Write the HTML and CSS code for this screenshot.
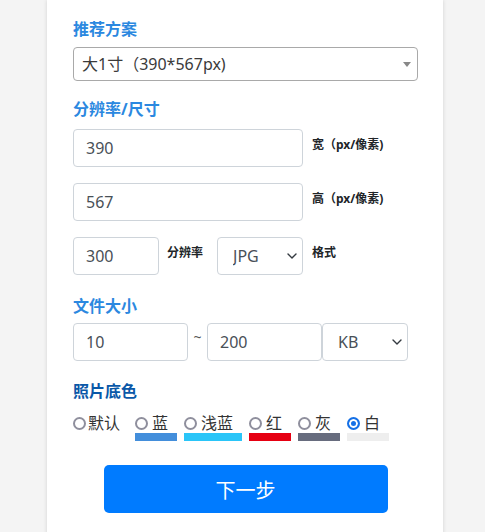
FILE: index.html
```html
<!DOCTYPE html>
<html lang="zh-CN">
<head>
<meta charset="utf-8">
<title>证件照规格</title>
<link rel="stylesheet" href="styles.css">
</head>
<body>
<div class="card">
  <h3 class="heading h-plan">推荐方案</h3>
  <div class="select-wrap plan-wrap">
    <select class="plan">
      <option>大1寸（390*567px)</option>
    </select>
    <svg class="tri" width="8" height="5" viewBox="0 0 8 5"><path d="M0 0H8L4 5Z" fill="#888"/></svg>
  </div>

  <h3 class="heading h-size">分辨率/尺寸</h3>
  <div class="row">
    <input class="input wide" type="text" value="390">
    <span class="note">宽（px/像素)</span>
  </div>
  <div class="row">
    <input class="input wide" type="text" value="567">
    <span class="note">高（px/像素)</span>
  </div>
  <div class="row">
    <input class="input short" type="text" value="300">
    <span class="note note-dpi">分辨率</span>
    <div class="select-wrap small">
      <select class="cselect"><option>JPG</option></select>
      <svg class="chev" width="10" height="6" viewBox="0 0 10 6"><polyline points="1,1 5,5 9,1" fill="none" stroke="#343a40" stroke-width="1.4" stroke-linecap="round" stroke-linejoin="round"/></svg>
    </div>
    <span class="note">格式</span>
  </div>

  <h3 class="heading h-file">文件大小</h3>
  <div class="row">
    <input class="input mid" type="text" value="10">
    <span class="tilde">~</span>
    <input class="input mid" type="text" value="200">
    <div class="select-wrap small">
      <select class="cselect"><option>KB</option></select>
      <svg class="chev" width="10" height="6" viewBox="0 0 10 6"><polyline points="1,1 5,5 9,1" fill="none" stroke="#343a40" stroke-width="1.4" stroke-linecap="round" stroke-linejoin="round"/></svg>
    </div>
  </div>

  <h3 class="heading h-bg">照片底色</h3>
  <div class="colors">
    <label class="opt opt-default"><span class="opt-top"><input class="radio" type="radio" name="bg">默认</span></label>
    <label class="opt"><span class="opt-top"><input class="radio" type="radio" name="bg">蓝</span><span class="swatch sw-blue"></span></label>
    <label class="opt"><span class="opt-top"><input class="radio" type="radio" name="bg">浅蓝</span><span class="swatch sw-light"></span></label>
    <label class="opt"><span class="opt-top"><input class="radio" type="radio" name="bg">红</span><span class="swatch sw-red"></span></label>
    <label class="opt"><span class="opt-top"><input class="radio" type="radio" name="bg">灰</span><span class="swatch sw-gray"></span></label>
    <label class="opt"><span class="opt-top"><input class="radio" type="radio" name="bg" checked>白</span><span class="swatch sw-white"></span></label>
  </div>

  <button class="next" type="button">下一步</button>
</div>
</body>
</html>
```

FILE: styles.css
```css
html, body {
  margin: 0;
  padding: 0;
}
body {
  background: #f4f4f4;
  font-family: "Noto Sans", "Noto Sans CJK SC", sans-serif;
}
.card {
  width: 396px;
  min-height: 560px;
  margin-left: 47px;
  box-sizing: border-box;
  padding: 17px 25px 40px 26px;
  background: #fff;
  box-shadow: 0 0 4px rgba(0, 0, 0, 0.14);
}
.heading {
  margin: 0;
  font-size: 16px;
  line-height: 24px;
  font-weight: 700;
  color: #2b88e0;
}
.h-plan { margin-bottom: 6px; }
.h-size { margin: 16px 0 8px; }
.h-file { margin: 19px 0 5px; }
.h-bg { margin: 18px 0 11px; color: #0a58a8; }

.select-wrap {
  position: relative;
}
.plan-wrap {
  height: 34px;
}
.plan {
  -webkit-appearance: none;
  appearance: none;
  width: 100%;
  height: 34px;
  box-sizing: border-box;
  border: 1px solid #a9a9a9;
  border-radius: 4px;
  background: #fff;
  padding: 0 8px;
  font-family: inherit;
  font-size: 16px;
  color: #3a3a3a;
  outline: none;
}
.tri {
  position: absolute;
  right: 7px;
  top: 15px;
  pointer-events: none;
}

.row {
  display: flex;
  align-items: flex-start;
}
.row + .row {
  margin-top: 16px;
}
.input {
  height: 38px;
  box-sizing: border-box;
  border: 1px solid #ced4da;
  border-radius: 4px;
  padding: 0 12px;
  font-family: inherit;
  font-size: 16px;
  color: #495057;
  background: #fff;
  outline: none;
}
.wide { width: 230px; }
.short { width: 86px; }
.mid { width: 115px; }
.note {
  margin: 8px 0 0 9px;
  font-size: 12px;
  line-height: 16px;
  font-weight: 700;
  color: #212529;
  white-space: nowrap;
}
.note-dpi {
  margin-left: 8px;
  margin-right: 14px;
}
.small {
  width: 86px;
  height: 38px;
}
.cselect {
  -webkit-appearance: none;
  appearance: none;
  width: 100%;
  height: 38px;
  box-sizing: border-box;
  border: 1px solid #ced4da;
  border-radius: 4px;
  background: #fff;
  padding: 0 20px 0 15px;
  font-family: inherit;
  font-size: 16px;
  color: #495057;
  outline: none;
}
.chev {
  position: absolute;
  right: 6px;
  top: 16px;
  pointer-events: none;
}
.tilde {
  width: 19px;
  text-align: center;
  font-size: 14px;
  line-height: 16px;
  color: #555;
  padding-top: 6px;
}

.colors {
  display: flex;
  align-items: flex-start;
  gap: 7px;
}
.opt {
  display: flex;
  flex-direction: column;
  cursor: pointer;
}
.opt-top {
  display: flex;
  align-items: center;
  height: 18px;
  padding-right: 9px;
  font-size: 16px;
  line-height: 18px;
  color: #333;
}
.opt-default .opt-top {
  padding-right: 8px;
}
.opt-default .radio {
  margin-right: 2px;
}
.radio {
  -webkit-appearance: none;
  appearance: none;
  width: 13px;
  height: 13px;
  box-sizing: border-box;
  margin: 0 4px 0 0;
  border: 2px solid #8f8f9d;
  border-radius: 50%;
  background: #fff;
  flex: none;
}
.radio:checked {
  border-color: #1570e6;
  background: #1570e6;
  box-shadow: inset 0 0 0 2px #fff;
}
.swatch {
  display: block;
  height: 8px;
  margin-top: 1px;
}
.sw-blue { background: #438edb; }
.sw-light { background: #2ac5f8; }
.sw-red { background: #e60012; }
.sw-gray { background: #676c7e; }
.sw-white { background: #eeeeee; }

.next {
  display: block;
  width: 284px;
  height: 48px;
  margin: 24px auto 0;
  border: none;
  border-radius: 5px;
  background: #007bff;
  color: #fff;
  font-family: inherit;
  font-size: 20px;
  cursor: pointer;
}
```
